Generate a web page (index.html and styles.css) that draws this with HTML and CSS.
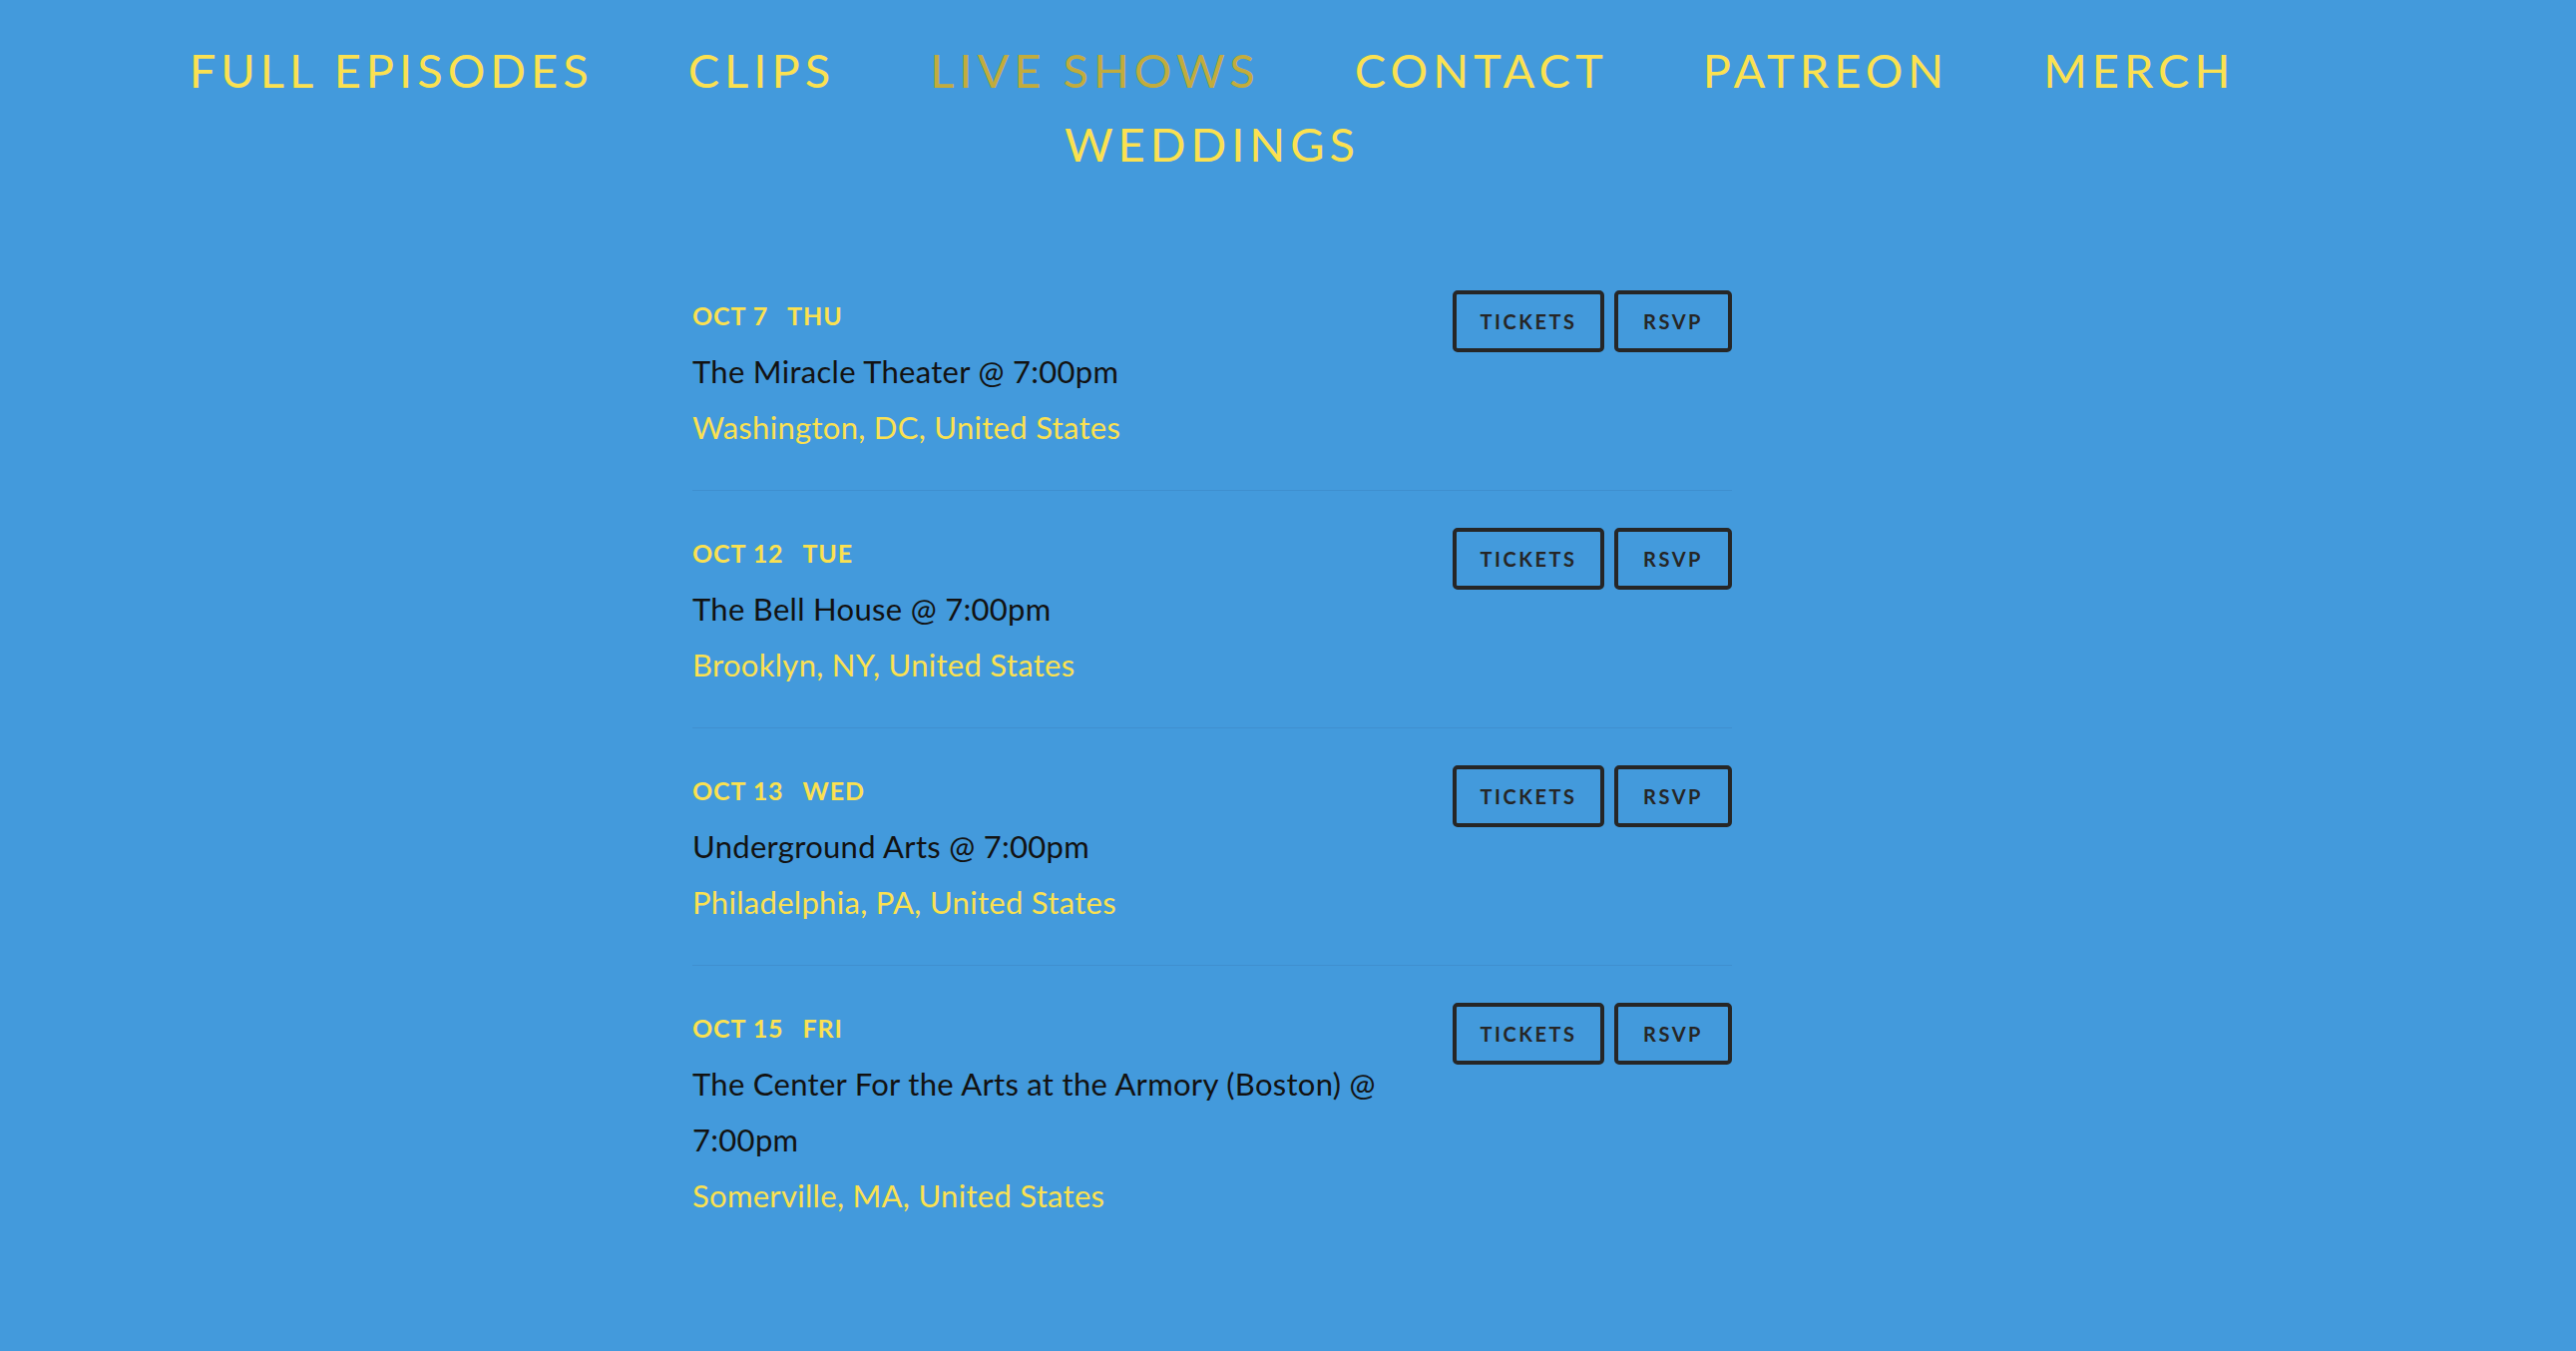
FILE: index.html
```html
<!DOCTYPE html>
<html lang="en">
<head>
<meta charset="utf-8">
<title>Live Shows</title>
<link rel="stylesheet" href="styles.css">
</head>
<body>
<div class="page">
  <nav class="nav">
    <a class="nav-link" href="#">FULL EPISODES</a>
    <a class="nav-link" href="#">CLIPS</a>
    <a class="nav-link active" href="#">LIVE SHOWS</a>
    <a class="nav-link" href="#">CONTACT</a>
    <a class="nav-link" href="#">PATREON</a>
    <a class="nav-link" href="#">MERCH</a>
    <a class="nav-link" href="#">WEDDINGS</a>
  </nav>

  <main class="events">
    <article class="event">
      <div class="event-info">
        <div class="event-date"><span>OCT 7</span><span>THU</span></div>
        <div class="event-venue">The Miracle Theater @ 7:00pm</div>
        <div class="event-location">Washington, DC, United States</div>
      </div>
      <div class="event-actions">
        <a class="btn" href="#">TICKETS</a>
        <a class="btn btn-rsvp" href="#">RSVP</a>
      </div>
    </article>

    <article class="event">
      <div class="event-info">
        <div class="event-date"><span>OCT 12</span><span>TUE</span></div>
        <div class="event-venue">The Bell House @ 7:00pm</div>
        <div class="event-location">Brooklyn, NY, United States</div>
      </div>
      <div class="event-actions">
        <a class="btn" href="#">TICKETS</a>
        <a class="btn btn-rsvp" href="#">RSVP</a>
      </div>
    </article>

    <article class="event">
      <div class="event-info">
        <div class="event-date"><span>OCT 13</span><span>WED</span></div>
        <div class="event-venue">Underground Arts @ 7:00pm</div>
        <div class="event-location">Philadelphia, PA, United States</div>
      </div>
      <div class="event-actions">
        <a class="btn" href="#">TICKETS</a>
        <a class="btn btn-rsvp" href="#">RSVP</a>
      </div>
    </article>

    <article class="event last">
      <div class="event-info">
        <div class="event-date"><span>OCT 15</span><span>FRI</span></div>
        <div class="event-venue">The Center For the Arts at the Armory (Boston) @ 7:00pm</div>
        <div class="event-location">Somerville, MA, United States</div>
      </div>
      <div class="event-actions">
        <a class="btn" href="#">TICKETS</a>
        <a class="btn btn-rsvp" href="#">RSVP</a>
      </div>
    </article>
  </main>
</div>
</body>
</html>
```

FILE: styles.css
```css
html, body {
  margin: 0;
  padding: 0;
}

body {
  background: #439adc;
  font-family: Lato, "Open Sans", "Liberation Sans", sans-serif;
  min-height: 100vh;
}

.page {
  padding-right: 152px;
}

.nav {
  display: flex;
  flex-wrap: wrap;
  justify-content: center;
  column-gap: 95px;
  max-width: 2300px;
  margin: 0 auto;
  padding-top: 33px;
}

.nav-link {
  font-size: 47px;
  line-height: 74px;
  letter-spacing: 5px;
  color: #fbe150;
  text-decoration: none;
  font-weight: 400;
}

.nav-link.active {
  color: #c2ac3c;
}

.events {
  width: 1042px;
  margin: 73px auto 0;
}

.event {
  display: flex;
  justify-content: space-between;
  align-items: flex-start;
  padding: 34px 0 35px;
  border-bottom: 1px solid #3f8fcf;
}

.event.last {
  border-bottom: none;
}

.event-info {
  width: 720px;
}

.event-date {
  display: flex;
  gap: 19px;
  font-size: 25px;
  line-height: 56px;
  font-weight: 700;
  color: #fbe150;
  letter-spacing: 0.9px;
}

.event-venue {
  font-size: 31px;
  line-height: 56px;
  letter-spacing: 0.3px;
  color: #121212;
}

.event-location {
  font-size: 31px;
  line-height: 56px;
  letter-spacing: 0.3px;
  color: #fbe150;
}

.event-actions {
  display: flex;
  gap: 10px;
  margin-top: 3px;
}

.btn {
  display: flex;
  align-items: center;
  justify-content: center;
  box-sizing: border-box;
  height: 62px;
  width: 152px;
  border: 4px solid #262626;
  border-radius: 5px;
  font-size: 20px;
  font-weight: 700;
  letter-spacing: 2.5px;
  color: #262626;
  text-decoration: none;
}

.btn-rsvp {
  width: 118px;
}
```
